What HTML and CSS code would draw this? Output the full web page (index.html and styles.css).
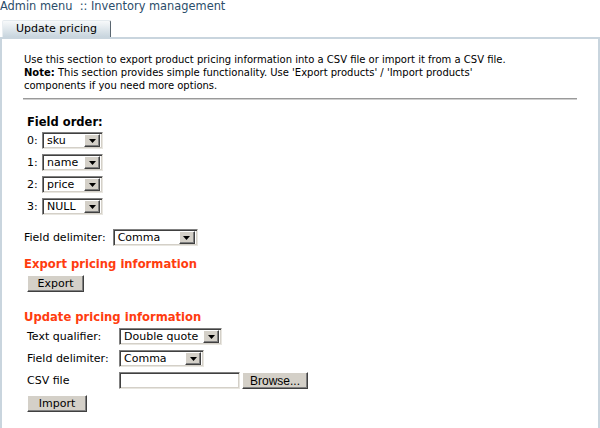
FILE: index.html
```html
<!DOCTYPE html>
<html>
<head>
<meta charset="utf-8">
<link rel="stylesheet" href="styles.css">
</head>
<body>
<div class="crumb">Admin menu&nbsp; :: Inventory management</div>
<div class="tabs"><div class="tab">Update pricing</div></div>
<div class="panel">
  <div class="intro">
    Use this section to export product pricing information into a CSV file or import it from a CSV file.<br>
    <b>Note:</b> This section provides simple functionality. Use 'Export products' / 'Import products'<br>
    components if you need more options.
  </div>
  <div class="rule"></div>
  <h2 class="order-title">Field order:</h2>
  <div class="order">
    <div class="orow"><span class="num">0:</span><span class="select w60"><span class="val">sku</span><span class="arrow"><svg width="7" height="4" viewBox="0 0 7 4"><path d="M0 0h7L3.5 4z" fill="#000"/></svg></span></span></div>
    <div class="orow"><span class="num">1:</span><span class="select w60"><span class="val">name</span><span class="arrow"><svg width="7" height="4" viewBox="0 0 7 4"><path d="M0 0h7L3.5 4z" fill="#000"/></svg></span></span></div>
    <div class="orow"><span class="num">2:</span><span class="select w60"><span class="val">price</span><span class="arrow"><svg width="7" height="4" viewBox="0 0 7 4"><path d="M0 0h7L3.5 4z" fill="#000"/></svg></span></span></div>
    <div class="orow"><span class="num">3:</span><span class="select w60"><span class="val">NULL</span><span class="arrow"><svg width="7" height="4" viewBox="0 0 7 4"><path d="M0 0h7L3.5 4z" fill="#000"/></svg></span></span></div>
  </div>
  <div class="delim">
    <span class="dlabel">Field delimiter:</span><span class="select w84"><span class="val">Comma</span><span class="arrow"><svg width="7" height="4" viewBox="0 0 7 4"><path d="M0 0h7L3.5 4z" fill="#000"/></svg></span></span>
  </div>
  <h3 class="sect">Export pricing information</h3>
  <div class="btnrow"><span class="btn w56">Export</span></div>
  <h3 class="sect sect2">Update pricing information</h3>
  <div class="form">
    <span class="flabel">Text qualifier:</span>
    <span class="select w102"><span class="val">Double quote</span><span class="arrow"><svg width="7" height="4" viewBox="0 0 7 4"><path d="M0 0h7L3.5 4z" fill="#000"/></svg></span></span>
    <span class="flabel">Field delimiter:</span>
    <span class="select w84"><span class="val">Comma</span><span class="arrow"><svg width="7" height="4" viewBox="0 0 7 4"><path d="M0 0h7L3.5 4z" fill="#000"/></svg></span></span>
    <span class="flabel">CSV file</span>
    <span class="file"><span class="input"></span><span class="btn browse">Browse...</span></span>
  </div>
  <div class="btnrow2"><span class="btn w59">Import</span></div>
</div>
</body>
</html>
```
FILE: styles.css
```css
html, body {
  margin: 0;
  padding: 0;
  background: #fff;
}
body {
  width: 600px;
  height: 428px;
  overflow: hidden;
  font-family: "DejaVu Sans", Verdana, sans-serif;
  font-size: 10px;
  color: #000;
}
.crumb {
  height: 13px;
  line-height: 13px;
  font-size: 11.4px;
  color: #2b4d6a;
  white-space: nowrap;
}
.tabs {
  margin-top: 6px;
  padding-left: 2px;
  height: 18px;
  display: flex;
  align-items: flex-end;
}
.tab {
  width: 107px;
  height: 16px;
  line-height: 16px;
  text-align: center;
  font-size: 11px;
  color: #000;
  background: linear-gradient(#f7f9fa, #c8d5de);
  border-top: 1px solid #e4eaee;
  border-left: 1px solid #e8edf1;
  border-right: 1px solid #5a6670;
  border-radius: 2px 2px 0 0;
}
.panel {
  border: 2px solid #c9d5de;
  height: 387px;
  padding: 14px 0 0 22px;
  box-sizing: content-box;
  width: 574px;
}
.intro {
  line-height: 13px;
  font-size: 10px;
}
.rule {
  margin: 6px 0 0 -1px;
  width: 554px;
  height: 1px;
  background: #9a9a9a;
  border-bottom: 1px solid #cfcfcf;
}
.order-title {
  margin: 15px 0 0 3px;
  font-size: 11.5px;
  line-height: 14px;
  font-weight: bold;
}
.order {
  margin: 3px 0 0 3px;
  display: flex;
  flex-direction: column;
  gap: 5px;
}
.orow {
  display: flex;
  align-items: center;
  height: 17px;
  font-size: 11px;
}
.num {
  width: 15px;
}
.select {
  display: inline-flex;
  align-items: center;
  box-sizing: border-box;
  height: 17px;
  border-top: 1px solid #808080;
  border-left: 1px solid #808080;
  border-right: 1px solid #e8e6e0;
  border-bottom: 1px solid #e8e6e0;
  box-shadow: inset 1px 1px 0 #404040, inset -1px -1px 0 #d4d0c8;
  background: #fff;
  padding: 2px;
}
.val {
  flex: 1;
  padding-left: 2px;
  font-size: 11px;
  line-height: 13px;
  white-space: nowrap;
}
.arrow {
  width: 16px;
  height: 13px;
  box-sizing: border-box;
  background: #d4d0c8;
  border-top: 1px solid #fff;
  border-left: 1px solid #fff;
  border-right: 1px solid #404040;
  border-bottom: 1px solid #404040;
  box-shadow: inset -1px -1px 0 #808080;
  display: flex;
  align-items: center;
  justify-content: center;
}
.arrow svg {
  display: block;
  margin-top: 1px;
}
.w60 { width: 61px; }
.w84 { width: 85px; }
.w102 { width: 103px; }
.delim {
  margin-top: 14px;
  display: flex;
  align-items: center;
  gap: 7px;
  font-size: 11px;
}
.sect {
  margin: 10px 0 0 0;
  font-size: 11.6px;
  line-height: 16px;
  font-weight: bold;
  color: #ff3c0f;
}
.sect2 {
  margin-top: 17px;
}
.btnrow {
  margin: 3px 0 0 3px;
  display: flex;
}
.btn {
  display: inline-flex;
  align-items: center;
  justify-content: center;
  box-sizing: border-box;
  height: 17px;
  background: #d4d0c8;
  border-top: 1px solid #fff;
  border-left: 1px solid #fff;
  border-right: 1px solid #404040;
  border-bottom: 1px solid #404040;
  box-shadow: inset -1px -1px 0 #808080;
  font-size: 11px;
}
.w56 { width: 57px; }
.w59 { width: 60px; }
.form {
  margin: 3px 0 0 3px;
  display: grid;
  grid-template-columns: 92px auto;
  row-gap: 5px;
  align-items: center;
  justify-items: start;
}
.flabel {
  font-size: 11px;
}
.file {
  display: flex;
  gap: 2px;
}
.input {
  width: 121px;
  height: 17px;
  box-sizing: border-box;
  border-top: 1px solid #808080;
  border-left: 1px solid #808080;
  border-right: 1px solid #e8e6e0;
  border-bottom: 1px solid #e8e6e0;
  box-shadow: inset 1px 1px 0 #404040, inset -1px -1px 0 #d4d0c8;
  background: #fff;
}
.browse {
  width: 66px;
  font-family: "Liberation Sans", Arial, sans-serif;
  font-size: 12px;
}
.btnrow2 {
  margin: 6px 0 0 3px;
  display: flex;
}
```
